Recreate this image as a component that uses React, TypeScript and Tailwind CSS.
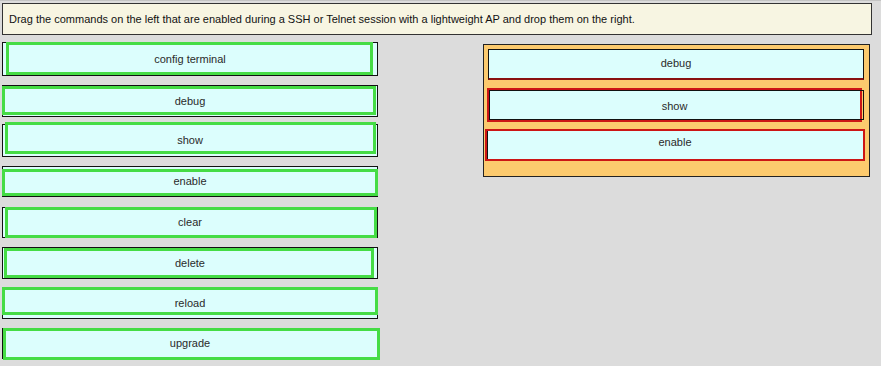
import React from "react";

type Item = { label: string; green: string; box: string };

const leftItems: Item[] = [
  { label: "config terminal", box: "mt-[0px] h-[34px]", green: "left-[3px] top-[-1px] right-[4px] bottom-[0px]" },
  { label: "debug", box: "mt-[9px] h-[32px]", green: "left-[-1px] top-[0px] right-[1px] bottom-[1px]" },
  { label: "show", box: "mt-[7px] h-[33px]", green: "left-[2px] top-[-3px] right-[1px] bottom-[2px]" },
  { label: "enable", box: "mt-[9px] h-[31px]", green: "left-[-1px] top-[2px] right-[-1px] bottom-[0px]" },
  { label: "clear", box: "mt-[10px] h-[31px]", green: "left-[2px] top-[-1px] right-[0px] bottom-[-1px]" },
  { label: "delete", box: "mt-[9px] h-[32px]", green: "left-[1px] top-[0px] right-[3px] bottom-[0px]" },
  { label: "reload", box: "mt-[8px] h-[32px]", green: "left-[-1px] top-[-1px] right-[-1px] bottom-[3px]" },
  { label: "upgrade", box: "mt-[9px] h-[31px]", green: "left-[0px] top-[-1px] right-[-3px] bottom-[-2px]" },
];

const font = { fontFamily: '"Liberation Sans", Arial, sans-serif' };

function LeftBox({ item }: { item: Item }) {
  return (
    <div className={`relative ${item.box} w-[376px] border border-[#111] bg-[#dcfefd] flex items-center justify-center`}>
      <div className={`absolute ${item.green} border-[3px] border-[#45dc45]`} />
      <span className="relative text-[11px] text-[#2a2a2a] leading-none">{item.label}</span>
    </div>
  );
}

export default function App() {
  return (
    <div className="w-[881px] h-[366px] bg-[#dcdcdc] border-t border-t-[#c4c4c4] overflow-hidden" style={font}>
      <div className="ml-[2px] mt-[2px] w-[870px] h-[32px] border border-[#333] bg-[#f7f5e2] flex items-center pl-[6px]">
        <span className="text-[11px] text-[#111] leading-none">
          Drag the commands on the left that are enabled during a SSH or Telnet session with a lightweight AP and drop them on the right.
        </span>
      </div>
      <div className="flex mt-[7px]">
        <div className="ml-[2px] flex flex-col w-[376px]">
          {leftItems.map((it) => (
            <LeftBox key={it.label} item={it} />
          ))}
        </div>
        <div className="ml-[105px] mt-[2px] w-[387px] h-[133px] border border-[#222] bg-[#fcca6e] pt-[4px]">
          <div className="ml-[4px] w-[376px] h-[31px] border border-[#111] border-b-2 border-b-[#8a1010] bg-[#dcfefd] flex items-center justify-center pb-[2px]">
            <span className="text-[11px] text-[#2a2a2a] leading-none">debug</span>
          </div>
          <div className="relative ml-[3px] mt-[8px] w-[375px] h-[34px] border-2 border-[#cc1515] bg-[#dcfefd] flex items-center justify-center pt-[3px]">
            <div className="absolute left-[0px] top-[0px] right-[-4px] bottom-[0px] border border-[#111]" />
            <span className="relative text-[11px] text-[#2a2a2a] leading-none">show</span>
          </div>
          <div className="relative ml-[1px] mt-[7px] w-[380px] h-[32px] border-2 border-[#cc1515] bg-[#dcfefd] flex items-center justify-center pb-[5px]">
            <div className="absolute left-[0px] top-[0px] bottom-[0px] w-[1px] bg-[#111]" />
            <span className="relative text-[11px] text-[#2a2a2a] leading-none">enable</span>
          </div>
        </div>
      </div>
    </div>
  );
}
